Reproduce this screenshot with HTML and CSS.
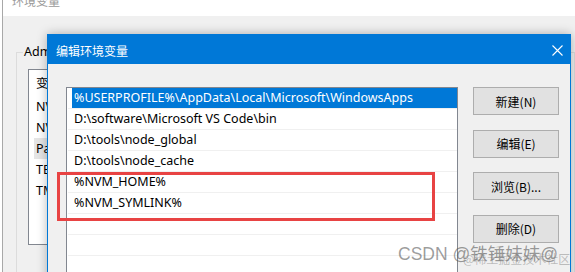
FILE: index.html
```html
<!DOCTYPE html>
<html>
<head>
<meta charset="utf-8">
<link rel="stylesheet" href="styles.css">
</head>
<body>
<div class="desktop">
  <div class="outer">
    <div class="outer-title"><span>环境变量</span></div>
    <div class="outer-body">
      <fieldset class="group">
        <legend>Administrator 的用户变量(U)</legend>
        <div class="bg-list">
          <div class="bg-head">变量</div>
          <div class="bg-row">NVM_HOME</div>
          <div class="bg-row">NVM_SYMLINK</div>
          <div class="bg-row sel">Path</div>
          <div class="bg-row">TEMP</div>
          <div class="bg-row">TMP</div>
        </div>
      </fieldset>
    </div>
  </div>

  <div class="dialog">
    <div class="titlebar">
      <span class="title">编辑环境变量</span>
      <svg class="close" width="11" height="11" viewBox="0 0 11 11"><path d="M0.5 0.5L10.5 10.5M10.5 0.5L0.5 10.5" stroke="#fff" stroke-width="1.1" fill="none"/></svg>
    </div>
    <div class="dlg-body">
      <div class="list">
        <div class="row sel"><div class="cell">%USERPROFILE%\AppData\Local\Microsoft\WindowsApps</div></div>
        <div class="row"><div class="cell">D:\software\Microsoft VS Code\bin</div></div>
        <div class="row"><div class="cell">D:\tools\node_global</div></div>
        <div class="row"><div class="cell">D:\tools\node_cache</div></div>
        <div class="row"><div class="cell">%NVM_HOME%</div></div>
        <div class="row"><div class="cell">%NVM_SYMLINK%</div></div>
        <div class="row"><div class="cell"></div></div>
        <div class="row"><div class="cell"></div></div>
        <div class="row"><div class="cell"></div></div>
      </div>
      <div class="buttons">
        <div class="btn">新建(N)</div>
        <div class="btn">编辑(E)</div>
        <div class="btn">浏览(B)...</div>
        <div class="btn">删除(D)</div>
      </div>
    </div>
  </div>

  <div class="redbox"></div>
  <div class="wm-main">CSDN @铁锤妹妹@</div>
  <div class="wm-sub">@稀土掘金技术社区</div>
</div>
</body>
</html>
```

FILE: styles.css
```css
* { box-sizing: border-box; }
html, body { margin: 0; padding: 0; background: #fff; }
body { font-family: "Noto Sans", "Noto Sans CJK SC", sans-serif; font-size: 12px; color: #000; }

.desktop {
  width: 575px;
  height: 272px;
  position: relative;
  overflow: hidden;
  background: #fff;
}

.outer {
  margin-left: 2px;
  border-left: 1px solid #a8a8a8;
  height: 100%;
  display: flex;
  flex-direction: column;
}
.outer-title {
  flex: none;
  height: 16px;
  overflow: hidden;
  background: #fff;
  padding-left: 9px;
  color: #9a9a9a;
  font-family: "Noto Sans CJK SC", sans-serif;
  font-size: 12px;
}
.outer-title span { display: block; line-height: 16px; margin-top: -7px; }
.outer-body {
  flex: 1;
  min-height: 0;
  overflow: hidden;
  background: #f0f0f0;
  padding: 28px 0 0 13px;
}
.group {
  margin: 0;
  padding: 9px 0 0 11px;
  border: 1px solid #dcdcdc;
  height: 260px;
  min-width: 0;
}
.group legend {
  padding: 0 1px;
  margin-left: -5px;
  font-family: "Noto Sans", "Noto Sans CJK SC", sans-serif;
  font-size: 12.5px;
  line-height: 16px;
}
.bg-list {
  width: 200px;
  height: 176px;
  background: #fff;
  border: 1px solid #828790;
}
.bg-head {
  height: 26px;
  line-height: 26px;
  padding-left: 7px;
  font-family: "Noto Sans CJK SC", sans-serif;
  font-size: 12.5px;
}
.bg-row {
  height: 21px;
  line-height: 21px;
  padding-left: 7px;
  font-size: 12.5px;
}
.bg-row.sel { background: #e5e5e5; margin-left: 5px; padding-left: 2px; }

.dialog {
  position: absolute;
  left: 47px;
  top: 34px;
  width: 524px;
  height: 270px;
  background: #f0f0f0;
  border: 1px solid #0078d7;
  box-shadow: 0 0 10px rgba(0, 0, 0, 0.28);
}
.titlebar {
  height: 29px;
  background: #0078d7;
  display: flex;
  align-items: center;
  justify-content: space-between;
  padding: 0 7px 0 8px;
  color: #fff;
}
.title {
  font-family: "Noto Sans CJK SC", sans-serif;
  font-size: 12px;
  margin-top: 1px;
}
.close { display: block; margin-top: 1px; }

.dlg-body {
  display: flex;
  gap: 15px;
  padding: 23px 0 0 18px;
}
.list {
  width: 392px;
  height: 200px;
  background: #fff;
  border: 1px solid #828790;
  border-bottom: none;
  flex: none;
}
.row {
  margin-left: 1px;
  height: 21px;
  border-bottom: 1px solid #f0f0f0;
}
.cell {
  margin-left: 4px;
  padding-left: 2px;
  height: 20px;
  line-height: 20px;
  white-space: nowrap;
  font-size: 12.5px;
}
.row.sel .cell { background: #0078d7; color: #fff; }

.buttons {
  display: flex;
  flex-direction: column;
  gap: 14.5px;
  flex: none;
}
.btn {
  width: 86px;
  height: 28px;
  background: #e1e1e1;
  border: 1px solid #adadad;
  display: flex;
  align-items: center;
  justify-content: center;
  font-family: "Noto Sans CJK SC", sans-serif;
  font-size: 12px;
}

.redbox {
  position: absolute;
  left: 57px;
  top: 172px;
  width: 378px;
  height: 49px;
  border: 3px solid #e84343;
}
.wm-main {
  position: absolute;
  left: 398px;
  top: 243px;
  font-family: "Liberation Sans", "Noto Sans CJK SC", sans-serif;
  font-size: 17.5px;
  line-height: 22px;
  color: rgba(90, 90, 90, 0.6);
  white-space: nowrap;
}
.wm-sub {
  position: absolute;
  left: 463px;
  top: 251px;
  font-family: "Noto Sans CJK SC", sans-serif;
  font-size: 12px;
  line-height: 16px;
  color: rgba(120, 120, 120, 0.45);
  white-space: nowrap;
}
```
